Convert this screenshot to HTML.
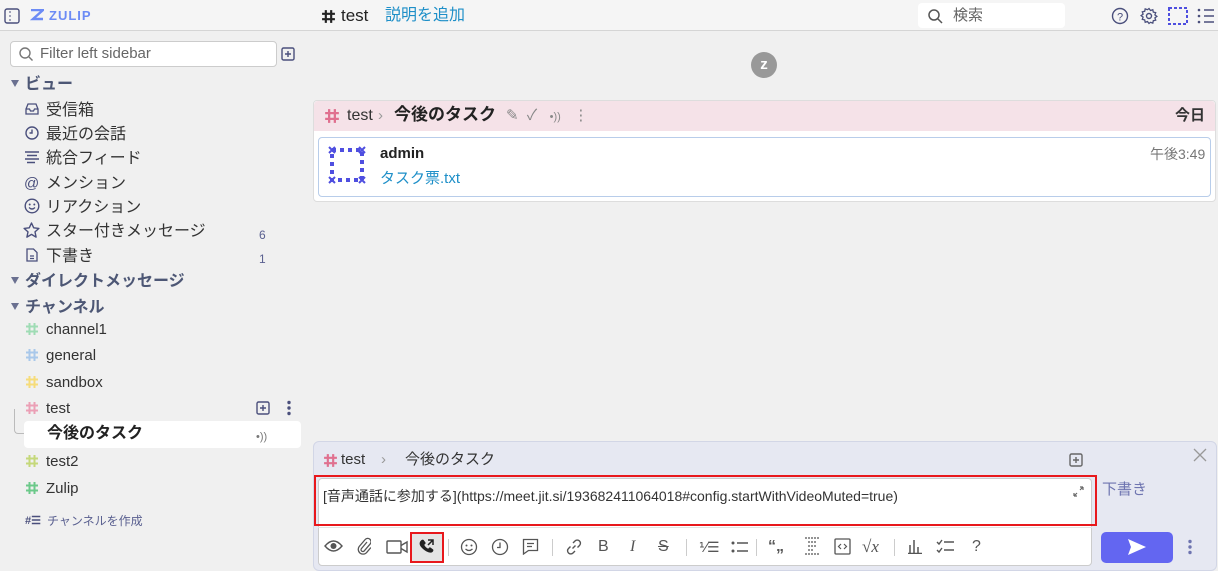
<!DOCTYPE html>
<html><head><meta charset="utf-8"><style>
*{box-sizing:border-box;margin:0;padding:0}
body{width:1218px;height:565px;overflow:hidden;background:#f0f0f0;font-family:"Liberation Sans","Noto Sans CJK JP",sans-serif;color:#333;position:relative;font-size:15px;line-height:20px}
.a{position:absolute;white-space:nowrap;line-height:20px}
.s{position:absolute}
.t{transform:translateY(2px)}
</style></head><body>
<svg width="0" height="0" style="position:absolute"><defs>
<symbol id="h" viewBox="0 0 14 14"><path d="M4.5 1v12M9.5 1v12M1 4.5h12M1 9.5h12" stroke="currentColor" stroke-width="2" fill="none"/></symbol>
<symbol id="p" viewBox="0 0 14 14"><rect x="1" y="1" width="12" height="12" rx="1.5" fill="none" stroke="currentColor" stroke-width="1.4"/><path d="M7 4v6M4 7h6" stroke="currentColor" stroke-width="1.4"/></symbol>
</defs></svg>
<!-- header -->
<div class="s" style="left:0;top:0;width:1218px;height:31px;background:#f5f5f5;border-bottom:1px solid #d5d5d5"></div>
<svg class="s" style="left:4px;top:8px" width="16" height="16" viewBox="0 0 16 16"><rect x="1" y="1" width="14" height="14" rx="2" fill="none" stroke="#4a4f7c" stroke-width="1.4"/><line x1="6" y1="3" x2="6" y2="13" stroke="#4a4f7c" stroke-dasharray="2 2"/></svg>
<svg class="s" style="left:30px;top:9px" width="14" height="12" viewBox="0 0 14 12"><path d="M1 1h12L3 10h10" fill="none" stroke="#6c8bf5" stroke-width="2.4"/></svg>
<div class="a" style="left:49px;top:6px;font-size:13px;font-weight:bold;color:#6c8bf5;letter-spacing:1px">ZULIP</div>
<svg class="s" style="left:321px;top:9px;color:#222" width="15" height="15"><use href="#h"/></svg>
<div class="a" style="left:341px;top:6px;font-size:17px;color:#222">test</div>
<div class="a" style="left:385px;top:6px;font-size:16px;color:#1e8fc8">説明を追加</div>
<div class="s" style="left:918px;top:3px;width:147px;height:25px;background:#fff;border-radius:4px"></div>
<svg class="s" style="left:927px;top:8px" width="16" height="16" viewBox="0 0 16 16"><circle cx="7" cy="7" r="5" fill="none" stroke="#555" stroke-width="1.5"/><line x1="11" y1="11" x2="15" y2="15" stroke="#555" stroke-width="1.5"/></svg>
<div class="a" style="left:953px;top:6px;font-size:15px;color:#666">検索</div>
<svg class="s" style="left:1111px;top:7px" width="18" height="18" viewBox="0 0 18 18"><circle cx="9" cy="9" r="7.5" fill="none" stroke="#4a4f7c" stroke-width="1.4"/><text x="9" y="13.5" font-size="11" text-anchor="middle" fill="#4a4f7c" font-family="Liberation Sans">?</text></svg>
<svg class="s" style="left:1140px;top:7px" width="18" height="18" viewBox="0 0 18 18"><circle cx="9" cy="9" r="2.5" fill="none" stroke="#4a4f7c" stroke-width="1.4"/><path d="M9 1.5l1.5 2 2.3-.8.5 2.4 2.4.5-.8 2.3 2 1.5-2 1.5.8 2.3-2.4.5-.5 2.4-2.3-.8L9 16.5l-1.5-2-2.3.8-.5-2.4-2.4-.5.8-2.3-2-1.5 2-1.5-.8-2.3 2.4-.5.5-2.4 2.3.8z" fill="none" stroke="#4a4f7c" stroke-width="1.3"/></svg>
<svg class="s" style="left:1168px;top:7px" width="20" height="18" viewBox="0 0 20 18"><rect x="1" y="1" width="18" height="16" fill="none" stroke="#4f4fe0" stroke-width="2" stroke-dasharray="3 2"/></svg>
<svg class="s" style="left:1197px;top:7px" width="18" height="18" viewBox="0 0 18 18"><g stroke="#4a4f7c" stroke-width="1.5"><line x1="7" y1="3" x2="17" y2="3"/><line x1="7" y1="9" x2="17" y2="9"/><line x1="7" y1="15" x2="17" y2="15"/></g><g fill="#4a4f7c"><circle cx="2" cy="3" r="1.3"/><circle cx="2" cy="9" r="1.3"/><circle cx="2" cy="15" r="1.3"/></g></svg>

<!-- sidebar -->
<div class="s" style="left:10px;top:41px;width:267px;height:26px;background:#fff;border:1px solid #ccc;border-radius:4px"></div>
<svg class="s" style="left:18px;top:46px" width="16" height="16" viewBox="0 0 16 16"><circle cx="7" cy="7" r="5" fill="none" stroke="#777" stroke-width="1.4"/><line x1="11" y1="11" x2="14.5" y2="14.5" stroke="#777" stroke-width="1.4"/></svg>
<div class="a" style="left:40px;top:44px;font-size:15px;color:#666">Filter left sidebar</div>
<svg class="s" style="left:281px;top:47px;color:#4a4f7c" width="14" height="14"><use href="#p"/></svg>

<svg class="s" style="left:11px;top:80px" width="8" height="7"><path d="M0 0h8L4 7z" fill="#6a7090"/></svg>
<div class="a t" style="left:25px;top:73px;font-size:16px;font-weight:bold;color:#4d5775">ビュー</div>

<svg class="s" style="left:25px;top:103px" width="14" height="12" viewBox="0 0 14 12"><path d="M1 6L3 1h8l2 5v5H1z M1 6h3.5l1 2h3l1-2H13" fill="none" stroke="#4a4f7c" stroke-width="1.3"/></svg>
<div class="a t" style="left:46px;top:99px;font-size:16px">受信箱</div>
<svg class="s" style="left:25px;top:126px" width="14" height="14" viewBox="0 0 14 14"><circle cx="7" cy="7" r="6" fill="none" stroke="#4a4f7c" stroke-width="1.4"/><path d="M7 3.5V7H4.5" fill="none" stroke="#4a4f7c" stroke-width="1.4"/></svg>
<div class="a t" style="left:46px;top:123px;font-size:16px">最近の会話</div>
<svg class="s" style="left:25px;top:151px" width="14" height="13" viewBox="0 0 14 13"><path d="M0 1h14M2 4.5h10M0 8h14M2 11.5h8" stroke="#4a4f7c" stroke-width="1.4"/></svg>
<div class="a t" style="left:46px;top:147px;font-size:16px">統合フィード</div>
<div class="a t" style="left:24px;top:172px;font-size:15px;color:#4a4f7c">@</div>
<div class="a t" style="left:46px;top:172px;font-size:16px">メンション</div>
<svg class="s" style="left:24px;top:198px" width="16" height="16" viewBox="0 0 16 16"><circle cx="8" cy="8" r="6.8" fill="none" stroke="#4a4f7c" stroke-width="1.4"/><circle cx="5.7" cy="6.5" r="1" fill="#4a4f7c"/><circle cx="10.3" cy="6.5" r="1" fill="#4a4f7c"/><path d="M5 9.5q3 3 6 0" fill="none" stroke="#4a4f7c" stroke-width="1.3"/></svg>
<div class="a t" style="left:46px;top:196px;font-size:16px">リアクション</div>
<svg class="s" style="left:23px;top:222px" width="17" height="17" viewBox="0 0 17 17"><path d="M8.5 1l2.2 4.8 5.2.6-3.9 3.5 1.1 5.2-4.6-2.7-4.6 2.7 1.1-5.2L1.1 6.4l5.2-.6z" fill="none" stroke="#4a4f7c" stroke-width="1.4" stroke-linejoin="round"/></svg>
<div class="a t" style="left:46px;top:220px;font-size:16px">スター付きメッセージ</div>
<div class="a t" style="left:259px;top:223px;font-size:12px;color:#5a6090">6</div>
<svg class="s" style="left:26px;top:248px" width="12" height="14" viewBox="0 0 12 14"><path d="M1 1h6.5L11 4.5V13H1z M4 8h4M4 10.5h4" fill="none" stroke="#4a4f7c" stroke-width="1.3"/></svg>
<div class="a t" style="left:46px;top:245px;font-size:16px">下書き</div>
<div class="a t" style="left:259px;top:247px;font-size:12px;color:#5a6090">1</div>

<svg class="s" style="left:11px;top:277px" width="8" height="7"><path d="M0 0h8L4 7z" fill="#6a7090"/></svg>
<div class="a t" style="left:25px;top:270px;font-size:16px;font-weight:bold;color:#4d5775">ダイレクトメッセージ</div>
<svg class="s" style="left:11px;top:303px" width="8" height="7"><path d="M0 0h8L4 7z" fill="#6a7090"/></svg>
<div class="a t" style="left:25px;top:296px;font-size:16px;font-weight:bold;color:#4d5775">チャンネル</div>

<svg class="s" style="left:25px;top:322px;color:#9fdcb5" width="14" height="14"><use href="#h"/></svg>
<div class="a t" style="left:46px;top:318px;font-size:15px">channel1</div>
<svg class="s" style="left:25px;top:348px;color:#a9c8ea" width="14" height="14"><use href="#h"/></svg>
<div class="a t" style="left:46px;top:344px;font-size:15px">general</div>
<svg class="s" style="left:25px;top:375px;color:#f6dc7a" width="14" height="14"><use href="#h"/></svg>
<div class="a t" style="left:46px;top:371px;font-size:15px">sandbox</div>
<svg class="s" style="left:25px;top:401px;color:#eba0b6" width="14" height="14"><use href="#h"/></svg>
<div class="a t" style="left:46px;top:397px;font-size:15px">test</div>
<div class="s" style="left:14px;top:409px;width:18px;height:25px;border-left:1px solid #bbb;border-bottom:1px solid #bbb;border-radius:0 0 0 4px"></div>
<svg class="s" style="left:256px;top:401px;color:#4a4f7c" width="14" height="14"><use href="#p"/></svg>
<svg class="s" style="left:286px;top:400px" width="6" height="16"><circle cx="3" cy="2.5" r="1.7" fill="#4a4f7c"/><circle cx="3" cy="8" r="1.7" fill="#4a4f7c"/><circle cx="3" cy="13.5" r="1.7" fill="#4a4f7c"/></svg>
<div class="s" style="left:24px;top:421px;width:277px;height:27px;background:#fff;border-radius:4px"></div>
<div class="a t" style="left:47px;top:422px;font-size:16px;font-weight:bold;color:#222">今後のタスク</div>
<div class="a t" style="left:256px;top:425px;font-size:11px;color:#777">•))</div>
<svg class="s" style="left:25px;top:454px;color:#c5d87a" width="14" height="14"><use href="#h"/></svg>
<div class="a t" style="left:46px;top:450px;font-size:15px">test2</div>
<svg class="s" style="left:25px;top:481px;color:#6cc98a" width="14" height="14"><use href="#h"/></svg>
<div class="a t" style="left:46px;top:477px;font-size:15px">Zulip</div>
<div class="a t" style="left:25px;top:509px;font-size:11px;font-weight:bold;color:#4a4f7c">#☰</div>
<div class="a t" style="left:47px;top:509px;font-size:12px;color:#5a6090">チャンネルを作成</div>

<!-- main -->
<div class="a" style="left:751px;top:52px;width:26px;height:26px;border-radius:50%;background:#999;color:#fff;font-weight:bold;font-size:15px;text-align:center;line-height:26px">z</div>
<div class="s" style="left:313px;top:100px;width:903px;height:102px;background:#fff;border:1px solid #ddd;border-radius:4px"></div>
<div class="s" style="left:314px;top:101px;width:901px;height:30px;background:#f5e2e8;border-radius:4px 4px 0 0"></div>
<svg class="s" style="left:324px;top:108px;color:#e0708f" width="16" height="16"><use href="#h"/></svg>
<div class="a" style="left:347px;top:106px;font-size:16px;color:#333">test</div>
<div class="a" style="left:378px;top:106px;font-size:15px;color:#999">›</div>
<div class="a" style="left:394px;top:105px;font-size:17px;font-weight:bold;color:#222">今後のタスク</div>
<div class="a" style="left:506px;top:106px;font-size:15px;color:#888">✎ &nbsp;✓ &nbsp; <span style="font-size:11px">•))</span> &nbsp; ⋮</div>
<div class="a" style="left:1175px;top:106px;font-size:15px;font-weight:bold;color:#333">今日</div>
<div class="s" style="left:318px;top:137px;width:893px;height:60px;border:1px solid #b8cdea;border-radius:4px"></div>
<svg class="s" style="left:328px;top:146px" width="38" height="38" viewBox="0 0 38 38"><rect x="4" y="4" width="30" height="30" fill="none" stroke="#4f4fe0" stroke-width="4" stroke-dasharray="4 4"/><path d="M1 1l6 6M7 1L1 7M31 1l6 6M37 1l-6 6M1 31l6 6M7 31l-6 6M31 31l6 6M37 31l-6 6" stroke="#4f4fe0" stroke-width="2"/></svg>
<div class="a" style="left:380px;top:144px;font-size:15px;font-weight:bold;color:#222">admin</div>
<div class="a" style="left:380px;top:169px;font-size:15px;color:#1e8fc8">タスク票.txt</div>
<div class="a" style="left:1150px;top:144px;font-size:14px;color:#777">午後3:49</div>

<!-- compose -->
<div class="s" style="left:313px;top:441px;width:904px;height:130px;background:#e6e8f2;border:1px solid #d2d6e6;border-radius:6px"></div>
<svg class="s" style="left:323px;top:453px;color:#e0708f" width="15" height="15"><use href="#h"/></svg>
<div class="a" style="left:341px;top:450px;font-size:15px;color:#333">test</div>
<div class="a" style="left:381px;top:450px;font-size:15px;color:#999">›</div>
<div class="a" style="left:405px;top:450px;font-size:15px;color:#333">今後のタスク</div>
<svg class="s" style="left:1069px;top:453px;color:#666" width="14" height="14"><use href="#p"/></svg>
<svg class="s" style="left:1193px;top:448px" width="14" height="14"><path d="M1 1l12 12M13 1L1 13" stroke="#999" stroke-width="1.3"/></svg>
<div class="s" style="left:318px;top:478px;width:774px;height:88px;background:#fff;border:1px solid #ccc;border-radius:4px"></div>
<div class="s" style="left:318px;top:527px;width:774px;height:1px;background:#e3e3e3"></div>
<div class="s" style="left:314px;top:475px;width:783px;height:51px;border:2px solid #e8181c"></div>
<div class="a" style="left:323px;top:486px;font-size:14px;color:#333">[音声通話に参加する](https://meet.jit.si/193682411064018#config.startWithVideoMuted=true)</div>
<svg class="s" style="left:1073px;top:486px" width="11" height="11"><path d="M1 10l3-3M10 1L7 4M1 10V7M1 10h3M10 1H7M10 1v3" stroke="#666" stroke-width="1.2" fill="none"/></svg>
<div class="a" style="left:1102px;top:480px;font-size:15px;color:#6e74b0">下書き</div>
<div class="s" style="left:410px;top:532px;width:34px;height:31px;background:#e5e5e5;border:2px solid #e8181c"></div>
<div class="s" style="left:324px;top:537px;font-size:16px;color:#555;line-height:20px">
<svg class="s" style="left:0;top:2px" width="19" height="14" viewBox="0 0 19 14"><path d="M1 7q8.5-10 17 0q-8.5 10-17 0z" fill="none" stroke="#555" stroke-width="1.4"/><circle cx="9.5" cy="7" r="3" fill="#555"/></svg>
<svg class="s" style="left:33px;top:0" width="14" height="18" viewBox="0 0 14 18"><path d="M10 5l-5.5 6.5a1.8 1.8 0 0 0 2.7 2.4l6-7a3.3 3.3 0 0 0-5-4.4l-6 7a4.8 4.8 0 0 0 7.2 6.3l4.5-5.3" fill="none" stroke="#555" stroke-width="1.3"/></svg>
<svg class="s" style="left:62px;top:3px" width="22" height="14" viewBox="0 0 22 14"><rect x="1" y="1" width="14" height="12" rx="1" fill="none" stroke="#555" stroke-width="1.4"/><path d="M15 5.5l6-3.5v10l-6-3.5" fill="none" stroke="#555" stroke-width="1.4"/></svg>
<svg class="s" style="left:95px;top:1px" width="16" height="16" viewBox="0 0 16 16"><path d="M2 2.5c1-1 2-1.2 2.6-.5l1.8 2.4c.4.6.2 1.3-.4 1.8l-.8.6c.8 1.8 2.2 3.2 4 4l.6-.8c.5-.6 1.2-.8 1.8-.4l2.4 1.8c.7.6.5 1.6-.5 2.6C11 16 6 13 3 10S0 4.5 2 2.5z" fill="#222"/><path d="M9 2h5v5M14 2L9 7" stroke="#222" stroke-width="1.5" fill="none"/></svg>
<div class="s" style="left:124px;top:2px;width:1px;height:17px;background:#ccc"></div>
<svg class="s" style="left:136px;top:1px" width="18" height="18" viewBox="0 0 18 18"><circle cx="9" cy="9" r="7.5" fill="none" stroke="#555" stroke-width="1.3"/><circle cx="6.5" cy="7.5" r="1" fill="#555"/><circle cx="11.5" cy="7.5" r="1" fill="#555"/><path d="M5.5 11q3.5 3 7 0" fill="none" stroke="#555" stroke-width="1.3"/></svg>
<svg class="s" style="left:167px;top:1px" width="18" height="18" viewBox="0 0 18 18"><circle cx="9" cy="9" r="7.5" fill="none" stroke="#555" stroke-width="1.3"/><path d="M9 4.5V9.5H6" fill="none" stroke="#555" stroke-width="1.3"/></svg>
<svg class="s" style="left:198px;top:1px" width="17" height="17" viewBox="0 0 17 17"><path d="M1.5 1.5h14v11h-9l-5 3.5z M5 5.5h7M5 8.5h5" fill="none" stroke="#555" stroke-width="1.3"/></svg>
<div class="s" style="left:228px;top:2px;width:1px;height:17px;background:#ccc"></div>
<svg class="s" style="left:241px;top:1px" width="18" height="18" viewBox="0 0 18 18"><path d="M7.5 10.5l3-3M8 5l2-2a3 3 0 0 1 4.5 4.5l-2 2M10 13l-2 2a3 3 0 0 1-4.5-4.5l2-2" fill="none" stroke="#555" stroke-width="1.4"/></svg>
<span style="position:absolute;left:274px;top:0">B</span>
<span style="position:absolute;left:306px;top:0;font-style:italic;font-family:'Liberation Serif'">I</span>
<span style="position:absolute;left:334px;top:0;text-decoration:line-through">S</span>
<div class="s" style="left:362px;top:2px;width:1px;height:17px;background:#ccc"></div>
<span style="position:absolute;left:375px;top:0;font-size:14px">⅟☰</span>
<svg class="s" style="left:407px;top:4px" width="17" height="12" viewBox="0 0 17 12"><circle cx="2" cy="2" r="1.5" fill="#555"/><circle cx="2" cy="10" r="1.5" fill="#555"/><path d="M6 2h11M6 10h11" stroke="#555" stroke-width="1.5"/></svg>
<div class="s" style="left:432px;top:2px;width:1px;height:17px;background:#ccc"></div>
<span style="position:absolute;left:444px;top:0;font-weight:bold">“„</span>
<svg class="s" style="left:480px;top:0" width="16" height="18" viewBox="0 0 16 18"><path d="M1 1h14M1 17h14M4 5h8M4 9h8M4 13h5" stroke="#555" stroke-width="1.2" stroke-dasharray="2 1"/></svg>
<svg class="s" style="left:510px;top:1px" width="17" height="17" viewBox="0 0 17 17"><rect x="1" y="1" width="15" height="15" rx="1" fill="none" stroke="#555" stroke-width="1.3"/><path d="M7 6l-2.5 2.5L7 11M10 6l2.5 2.5L10 11" fill="none" stroke="#555" stroke-width="1.2"/></svg>
<span style="position:absolute;left:538px;top:0;font-family:'Liberation Serif';font-size:17px">√<i>x</i></span>
<div class="s" style="left:570px;top:2px;width:1px;height:17px;background:#ccc"></div>
<svg class="s" style="left:584px;top:2px" width="14" height="15" viewBox="0 0 14 15"><path d="M2 6v8M6 1v13M10 8v6M0 14.5h14" stroke="#555" stroke-width="1.5"/></svg>
<svg class="s" style="left:612px;top:2px" width="18" height="15" viewBox="0 0 18 15"><path d="M1 3l2 2 3-4M1 11l2 2 3-4M8 3h10M8 11h10" fill="none" stroke="#555" stroke-width="1.4"/></svg>
<span style="position:absolute;left:648px;top:0">?</span>
</div>
<div class="s" style="left:1101px;top:532px;width:72px;height:31px;background:#6366f1;border-radius:5px"></div>
<svg class="s" style="left:1127px;top:538px" width="20" height="18" viewBox="0 0 20 18"><path d="M1 1l18 8-18 8 3-8z" fill="#fff"/></svg>
<svg class="s" style="left:1187px;top:539px" width="6" height="16"><circle cx="3" cy="2.5" r="1.7" fill="#6e74b0"/><circle cx="3" cy="8" r="1.7" fill="#6e74b0"/><circle cx="3" cy="13.5" r="1.7" fill="#6e74b0"/></svg>
</body></html>
